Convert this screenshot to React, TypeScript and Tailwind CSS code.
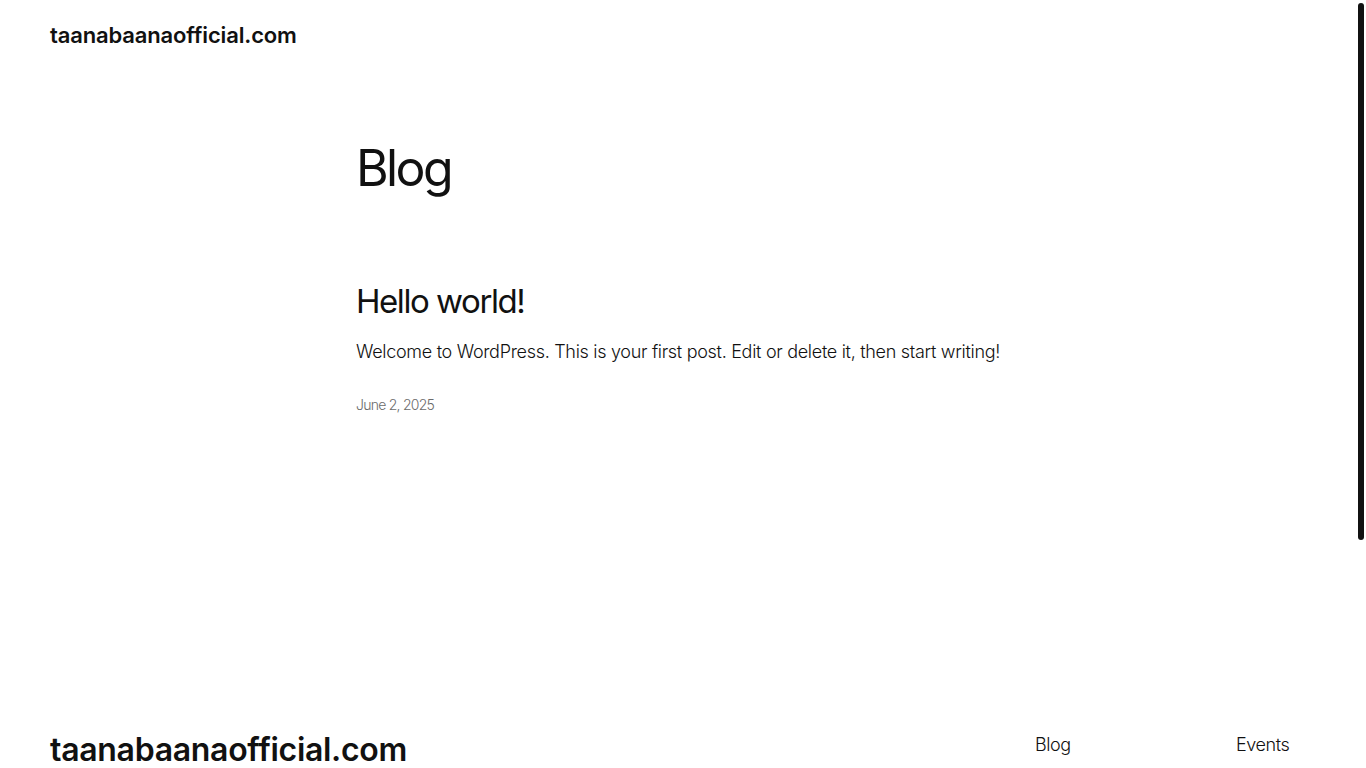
import React from "react";

export default function App() {
  return (
    <div className="relative min-h-[1090px] bg-white text-[#111111]" style={{ fontFamily: "Inter, 'Noto Sans', sans-serif" }}>
      <header className="px-[50px] pt-[21px] pb-[20px]">
        <div className="text-[22px] font-semibold tracking-[-0.15px] leading-[28px]">taanabaanaofficial.com</div>
      </header>
      <main>
        <div className="max-w-[654px] mx-auto pt-[69px]">
          <h1 className="text-[50px] font-normal leading-[60px] tracking-[-2.6px]">Blog</h1>
          <article className="mt-[83px]">
            <h2 className="text-[33px] font-normal leading-[40px] tracking-[-1.45px]">Hello world!</h2>
            <p className="mt-[17px] text-[18px] font-light leading-[27px] tracking-[-0.3px]">Welcome to WordPress. This is your first post. Edit or delete it, then start writing!</p>
            <div className="mt-[29px] text-[14px] leading-[21px] font-light text-[#6b6b6b] tracking-[-0.75px]">June 2, 2025</div>
          </article>
        </div>
      </main>
      <footer className="mt-[316px] px-[50px] pb-[60px] flex justify-between">
        <div className="text-[32px] font-semibold tracking-[-0.3px] leading-[38px]">taanabaanaofficial.com</div>
        <div className="flex">
          <div className="w-[201px] flex flex-col gap-2 text-[18px] leading-[27px] font-light tracking-[-0.4px]">
            <span>Blog</span>
            <span>About</span>
            <span>FAQs</span>
            <span>Authors</span>
          </div>
          <div className="w-[80px] flex flex-col gap-2 text-[18px] leading-[27px] font-light tracking-[-0.4px]">
            <span>Events</span>
            <span>Shop</span>
            <span>Patterns</span>
            <span>Themes</span>
          </div>
        </div>
      </footer>
      <div className="fixed right-[2px] top-[3px] w-[6px] h-[537px] rounded-full bg-[#111111]" />
    </div>
  );
}
